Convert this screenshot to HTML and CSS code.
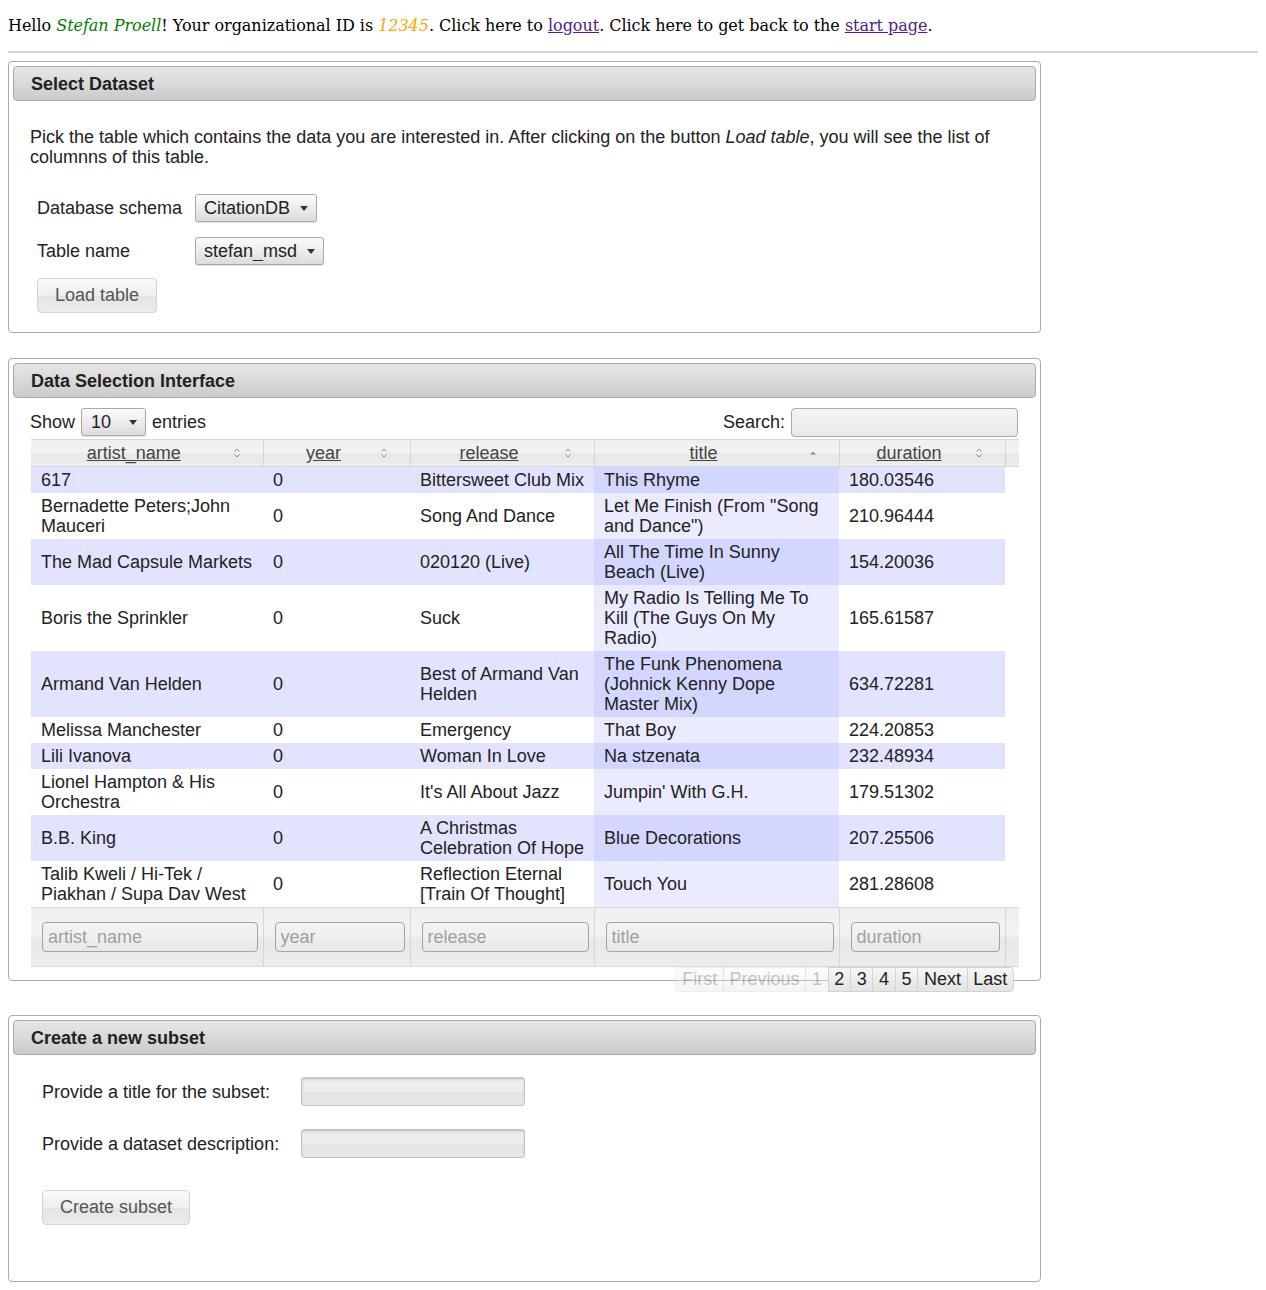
FILE: index.html
```html
<!DOCTYPE html>
<html>
<head>
<meta charset="utf-8">
<title>Data Selection</title>
<link rel="stylesheet" href="styles.css">
</head>
<body>
<p class="greeting">Hello <em class="user">Stefan Proell</em>! Your organizational ID is <em class="org">12345</em>. Click here to <a href="#" class="visited">logout</a>. Click here to get back to the <a href="#" class="visited">start page</a>.</p>
<hr class="sep">

<section class="panel panel-select">
  <div class="panel-head">Select Dataset</div>
  <div class="panel-body">
    <p class="intro">Pick the table which contains the data you are interested in. After clicking on the button <em>Load table</em>, you will see the list of columnns of this table.</p>
    <div class="form-grid">
      <label>Database schema</label>
      <span class="sel"><select><option>CitationDB</option></select></span>
      <label>Table name</label>
      <span class="sel"><select><option>stefan_msd</option></select></span>
    </div>
    <button class="btn btn-load">Load table</button>
  </div>
</section>

<section class="panel panel-data">
  <div class="panel-head">Data Selection Interface</div>
  <div class="panel-body">
    <div class="dt-controls">
      <div class="dt-length">Show <span class="sel sel-small"><select><option>10</option></select></span> entries</div>
      <div class="dt-search">Search: <input type="text" class="search-input"></div>
    </div>
    <div class="dt-head">
      <table class="dt">
        <colgroup><col class="c1"><col class="c2"><col class="c3"><col class="c4"><col class="c5"></colgroup>
        <thead>
          <tr>
            <th><div class="th-in"><a href="#">artist_name</a><svg class="sort" viewBox="0 0 8 12"><path d="M1.5 4.5 L4 2 L6.5 4.5 M1.5 7.5 L4 10 L6.5 7.5"/></svg></div></th>
            <th><div class="th-in"><a href="#">year</a><svg class="sort" viewBox="0 0 8 12"><path d="M1.5 4.5 L4 2 L6.5 4.5 M1.5 7.5 L4 10 L6.5 7.5"/></svg></div></th>
            <th><div class="th-in"><a href="#">release</a><svg class="sort" viewBox="0 0 8 12"><path d="M1.5 4.5 L4 2 L6.5 4.5 M1.5 7.5 L4 10 L6.5 7.5"/></svg></div></th>
            <th><div class="th-in"><a href="#">title</a><svg class="sort sort-asc" viewBox="0 0 8 12"><path d="M1 7.5 L4 4.5 L7 7.5 Z"/></svg></div></th>
            <th><div class="th-in"><a href="#">duration</a><svg class="sort" viewBox="0 0 8 12"><path d="M1.5 4.5 L4 2 L6.5 4.5 M1.5 7.5 L4 10 L6.5 7.5"/></svg></div></th>
          </tr>
        </thead>
      </table>
    </div>
    <table class="dt dt-body">
      <colgroup><col class="c1"><col class="c2"><col class="c3"><col class="c4"><col class="c5"></colgroup>
      <tbody>
        <tr class="odd"><td>617</td><td>0</td><td>Bittersweet Club Mix</td><td class="sorted">This Rhyme</td><td>180.03546</td></tr>
        <tr class="even"><td>Bernadette Peters;John Mauceri</td><td>0</td><td>Song And Dance</td><td class="sorted">Let Me Finish (From "Song and Dance")</td><td>210.96444</td></tr>
        <tr class="odd"><td>The Mad Capsule Markets</td><td>0</td><td>020120 (Live)</td><td class="sorted">All The Time In Sunny Beach (Live)</td><td>154.20036</td></tr>
        <tr class="even"><td>Boris the Sprinkler</td><td>0</td><td>Suck</td><td class="sorted">My Radio Is Telling Me To Kill (The Guys On My Radio)</td><td>165.61587</td></tr>
        <tr class="odd"><td>Armand Van Helden</td><td>0</td><td>Best of Armand Van Helden</td><td class="sorted">The Funk Phenomena (Johnick Kenny Dope Master Mix)</td><td>634.72281</td></tr>
        <tr class="even"><td>Melissa Manchester</td><td>0</td><td>Emergency</td><td class="sorted">That Boy</td><td>224.20853</td></tr>
        <tr class="odd"><td>Lili Ivanova</td><td>0</td><td>Woman In Love</td><td class="sorted">Na stzenata</td><td>232.48934</td></tr>
        <tr class="even"><td>Lionel Hampton &amp; His Orchestra</td><td>0</td><td>It's All About Jazz</td><td class="sorted">Jumpin' With G.H.</td><td>179.51302</td></tr>
        <tr class="odd"><td>B.B. King</td><td>0</td><td>A Christmas Celebration Of Hope</td><td class="sorted">Blue Decorations</td><td>207.25506</td></tr>
        <tr class="even"><td>Talib Kweli / Hi-Tek / Piakhan / Supa Dav West</td><td>0</td><td>Reflection Eternal [Train Of Thought]</td><td class="sorted">Touch You</td><td>281.28608</td></tr>
      </tbody>
    </table>
    <div class="dt-foot">
      <table class="dt">
        <colgroup><col class="c1"><col class="c2"><col class="c3"><col class="c4"><col class="c5"></colgroup>
        <tfoot>
          <tr>
            <th><input type="text" class="filter" placeholder="artist_name"></th>
            <th><input type="text" class="filter" placeholder="year"></th>
            <th><input type="text" class="filter" placeholder="release"></th>
            <th><input type="text" class="filter" placeholder="title"></th>
            <th><input type="text" class="filter" placeholder="duration"></th>
          </tr>
        </tfoot>
      </table>
    </div>
    <div class="pager">
      <a class="pg first disabled">First</a><a class="pg disabled">Previous</a><a class="pg disabled">1</a><a class="pg">2</a><a class="pg">3</a><a class="pg">4</a><a class="pg">5</a><a class="pg">Next</a><a class="pg last">Last</a>
    </div>
  </div>
</section>

<section class="panel panel-subset">
  <div class="panel-head">Create a new subset</div>
  <div class="panel-body">
    <div class="subset-grid">
      <label>Provide a title for the subset:</label>
      <input type="text" class="text-input">
      <label>Provide a dataset description:</label>
      <input type="text" class="text-input">
    </div>
    <button class="btn btn-create">Create subset</button>
  </div>
</section>
</body>
</html>
```

FILE: styles.css
```css
body {
  margin: 0;
  padding: 8px;
  font-family: "DejaVu Serif", serif;
  font-size: 16px;
  color: #000;
}

.greeting {
  margin: 8px 0 16px;
  letter-spacing: -0.03px;
}
.greeting .user { color: #008000; }
.greeting .org { color: #ffa500; }
.greeting a.visited { color: #551a8b; }

.sep {
  border: 0;
  border-top: 2px solid #d4d4d4;
  height: 0;
  margin: 0 0 8px;
}

.panel {
  width: 1033px;
  box-sizing: border-box;
  border: 1px solid #aaa;
  border-radius: 4px;
  padding: 4px;
  font-family: "Liberation Sans", Arial, sans-serif;
  font-size: 18px;
  line-height: 20px;
  color: #222;
}

.panel-head {
  height: 35px;
  box-sizing: border-box;
  border: 1px solid #aaa;
  border-radius: 4px;
  background: linear-gradient(#e6e6e6, #d9d9d9 50%, #cbcbcb);
  font-weight: bold;
  padding-left: 17px;
  display: flex;
  align-items: center;
  color: #222;
}

.panel-body {
  padding: 0 17px;
}

/* ---- panel 1 ---- */
.panel-select .panel-body { padding-bottom: 15px; }

.intro {
  margin: 26px 0 0;
}

.form-grid {
  display: grid;
  grid-template-columns: 158px auto;
  row-gap: 15px;
  align-items: center;
  justify-items: start;
  margin: 27px 0 0 7px;
}

.sel {
  position: relative;
  display: inline-block;
  vertical-align: middle;
}
.sel select {
  -webkit-appearance: none;
  appearance: none;
  height: 28px;
  box-sizing: border-box;
  border: 1px solid #a8a8a8;
  border-radius: 3px;
  background: linear-gradient(#fbfbfb, #ececec 50%, #dcdcdc);
  font-family: "Liberation Sans", Arial, sans-serif;
  font-size: 18px;
  color: #222;
  padding: 0 25px 0 8px;
  margin: 0;
  box-shadow: 0 1px 1px rgba(0,0,0,0.12);
}
.sel::after {
  content: "";
  position: absolute;
  right: 9px;
  top: 12px;
  border-left: 4.5px solid transparent;
  border-right: 4.5px solid transparent;
  border-top: 5px solid #333;
  pointer-events: none;
}
.sel-small select { width: 65px; padding-left: 9px; }
.sel-small::after { right: 9px; }

.btn {
  display: block;
  height: 35px;
  box-sizing: border-box;
  border: 1px solid #d3d3d3;
  border-radius: 4px;
  background: linear-gradient(#fafafa, #eeeeee 50%, #e4e4e4 52%, #ececec);
  font-family: "Liberation Sans", Arial, sans-serif;
  font-size: 18px;
  color: #555;
  padding: 0 17px;
  white-space: nowrap;
}
.btn-load {
  margin: 13px 0 0 7px;
}

/* ---- panel 2 ---- */
.panel-data { margin-top: 25px; }
.panel-data .panel-body { padding: 0 18px 0 17px; }

.dt-controls {
  margin-top: 10px;
  height: 28px;
  display: flex;
  justify-content: space-between;
  align-items: center;
}
.dt-length { display: flex; align-items: center; gap: 6px; }
.dt-search { display: flex; align-items: center; gap: 6px; }
.search-input {
  width: 227px;
  height: 29px;
  box-sizing: border-box;
  border: 1px solid #aaa;
  border-radius: 4px;
  background: linear-gradient(#f4f4f4, #efefef 50%, #e9e9e9);
  margin: 0;
}

.dt-head, .dt-foot {
  margin-left: 1px;
  width: 988px;
  background: linear-gradient(#efefef, #f3f3f3 45%, #e8e8e8 55%, #ececec);
}
.dt-head { margin-top: 3px; border-top: 1px solid #d8d8d8; border-bottom: 1px solid #d8d8d8; }
.dt-foot { border-top: 1px solid #d8d8d8; border-bottom: 1px solid #d8d8d8; }

.dt {
  width: 974px;
  table-layout: fixed;
  border-collapse: collapse;
  border-spacing: 0;
}
.dt-body { margin-left: 1px; }
.c1 { width: 232px; }
.c2 { width: 147px; }
.c3 { width: 184px; }
.c4 { width: 245px; }
.c5 { width: 166px; }

.dt thead th {
  height: 26px;
  padding: 0;
  font-weight: normal;
  border-left: 1px solid #d6d6d6;
}
.dt thead th:first-child { border-left: 0; }
.dt thead th:last-child { border-right: 1px solid #d6d6d6; }
.th-in {
  display: flex;
  align-items: center;
  padding-left: 10px;
}
.th-in a {
  flex: 1;
  text-align: center;
  color: #444;
  text-decoration: underline;
}
.sort {
  width: 8px;
  height: 12px;
  margin: 0 22px 0 6px;
  fill: none;
  stroke: #8c8c8c;
  stroke-width: 1;
}
.sort-asc { fill: #8c8c8c; stroke: none; }

.dt-body td {
  padding: 3px 8px 3px 10px;
  vertical-align: middle;
  color: #222;
}
.dt-body tr.odd { background: #e2e4ff; }
.dt-body tr.even { background: #fff; }
.dt-body tr.odd td.sorted { background: #d3d6ff; }
.dt-body tr.even td.sorted { background: #eaebff; }

.dt tfoot th {
  height: 58px;
  padding: 0 5px 0 11px;
  border-left: 1px solid #d6d6d6;
  font-weight: normal;
}
.dt tfoot th:first-child { border-left: 0; }
.dt tfoot th:last-child { border-right: 1px solid #d6d6d6; }
.filter {
  display: block;
  width: 100%;
  height: 30px;
  box-sizing: border-box;
  border: 1px solid #a3a3a3;
  border-radius: 4px;
  background: linear-gradient(#f3f3f3, #efefef 50%, #e8e8e8);
  font-family: "Liberation Sans", Arial, sans-serif;
  font-size: 18px;
  color: #222;
  padding: 0 5px;
  margin: 0;
}
.filter::placeholder { color: #a0a0a0; }

.pager {
  display: flex;
  justify-content: flex-end;
  margin: 0 4px -16px 0;
  position: relative;
}
.pg {
  display: block;
  height: 25px;
  box-sizing: border-box;
  line-height: 23px;
  padding: 0 5.7px;
  border: 1px solid #d3d3d3;
  margin-left: -1px;
  background: linear-gradient(#f6f6f6, #ececec 50%, #e4e4e4);
  color: #222;
}
.pg.first { border-radius: 4px 0 0 4px; }
.pg.last { border-radius: 0 4px 4px 0; }
.pg.disabled { opacity: 0.35; color: #555; }

/* ---- panel 3 ---- */
.panel-subset { margin-top: 34px; }
.panel-subset .panel-body { padding-bottom: 52px; }

.subset-grid {
  display: grid;
  grid-template-columns: 259px 224px;
  row-gap: 23px;
  align-items: center;
  margin: 22px 0 0 12px;
}
.text-input {
  width: 224px;
  height: 29px;
  box-sizing: border-box;
  border: 1px solid #c2c2c2;
  border-radius: 3px;
  background: linear-gradient(#e3e3e3, #eeeeee 20%, #ececec 50%, #e4e4e4 52%, #e9e9e9);
  box-shadow: inset 0 1px 2px rgba(0,0,0,0.15);
  margin: 0;
}
.btn-create {
  margin: 32px 0 0 12px;
}
```
